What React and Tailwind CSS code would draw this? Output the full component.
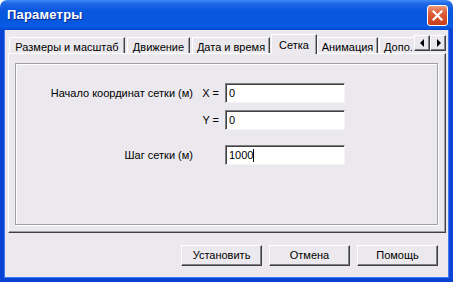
import { useState } from "react";

function Tab({ label, active, className = "" }) {
  if (active) {
    return (
      <div
        className={`relative z-10 -mb-px h-[20px] flex items-start justify-center pt-[2px] bg-[#ebe9ed] border-t border-l border-white border-r border-r-[#404040] shadow-[inset_-1px_0_0_#a0a0a0] ${className}`}
      >
        {label}
      </div>
    );
  }
  return (
    <div
      className={`h-[16px] flex items-start justify-center pt-[1px] whitespace-nowrap overflow-hidden bg-[#ebe9ed] border-t border-l border-white border-r border-r-[#404040] shadow-[inset_-1px_0_0_#a0a0a0] ${className}`}
    >
      {label}
    </div>
  );
}

function Field({ value, caret = false }) {
  return (
    <div className="w-[120px] h-[20px] bg-white border border-t-[#808080] border-l-[#808080] border-r-[#f4f4f4] border-b-[#f4f4f4] shadow-[inset_1px_1px_0_#404040] flex items-center pl-[3px] pt-px">
      <span>{value}</span>
      {caret && <span className="inline-block w-px h-[13px] bg-black" />}
    </div>
  );
}

function Button({ children }) {
  return (
    <button className="w-[81px] h-[21px] bg-[#ebe9ed] border border-t-white border-l-white border-r-[#404040] border-b-[#404040] shadow-[inset_-1px_-1px_0_#808080] text-[11px] text-black flex items-center justify-center">
      {children}
    </button>
  );
}

function ArrowButton({ dir }) {
  return (
    <div className="w-[16px] h-[16px] bg-[#ebe9ed] border border-t-white border-l-white border-r-[#404040] border-b-[#404040] shadow-[inset_-1px_-1px_0_#808080] flex items-center justify-center">
      <svg width="5" height="8" viewBox="0 0 5 8">
        {dir === "left" ? (
          <path d="M4 0 L4 8 L0 4 Z" fill="#000" />
        ) : (
          <path d="M1 0 L1 8 L5 4 Z" fill="#000" />
        )}
      </svg>
    </div>
  );
}

export default function App() {
  const [step] = useState("1000");

  return (
    <div
      className="w-[453px] h-[282px] flex flex-col overflow-hidden text-[11px] text-black"
      style={{ fontFamily: '"Liberation Sans", Arial, sans-serif' }}
    >
      <div className="h-[30px] shrink-0 rounded-t-[7px] flex items-center pl-[7px] pr-[5px] bg-[linear-gradient(to_bottom,#3d8bf5_0%,#1f68e6_12%,#0a58e0_35%,#0756de_70%,#0a5ce6_88%,#0047cf_100%)]">
        <span className="text-white font-bold text-[13px] tracking-[0.2px] [text-shadow:1px_1px_0_#0a2a8a]">
          Параметры
        </span>
        <div className="ml-auto w-[21px] h-[21px] rounded-[3px] border border-white bg-[linear-gradient(to_bottom,#ec9b7c_0%,#df5f3b_35%,#d24a26_75%,#c43f1f_100%)] flex items-center justify-center">
          <svg width="11" height="11" viewBox="0 0 11 11">
            <path d="M1.5 1.5 L9.5 9.5 M9.5 1.5 L1.5 9.5" stroke="#fff" strokeWidth="2.2" strokeLinecap="square" />
          </svg>
        </div>
      </div>

      <div className="flex-1 flex flex-col bg-[#ebe9ed] border-l-4 border-r-4 border-b-4 border-[#0b44d4] shadow-[inset_1px_0_0_#3c7cf0,inset_-1px_0_0_#3c7cf0,inset_0_-1px_0_#3c7cf0] pt-[3px] pl-[4px] pr-[3px]">
        <div className="w-[438px] h-[200px] flex flex-col">
          <div className="h-[20px] flex items-end">
            <Tab label="Размеры и масштаб" className="ml-[1px] w-[116px]" />
            <Tab label="Движение" className="ml-[2px] w-[63px]" />
            <Tab label="Дата и время" className="ml-[2px] w-[78px]" />
            <Tab label="Сетка" active className="ml-[1px] w-[46px]" />
            <Tab label="Анимация" className="w-[61px]" />
            <Tab label="Допо." className="ml-[1px] w-[35px] justify-start pl-[4px] border-r-0 shadow-none" />
            <div className="flex self-start mt-[2px]">
              <ArrowButton dir="left" />
              <ArrowButton dir="right" />
            </div>
          </div>
          <div className="flex-1 border border-t-white border-l-white border-r-[#404040] border-b-[#404040] shadow-[inset_-1px_-1px_0_#a0a0a0] pt-[9px] pl-[6px] pr-[7px] pb-[7px]">
            <div className="h-full border border-[#a0a0a0] shadow-[inset_1px_1px_0_#fff,1px_1px_0_#fff] pt-[19px]">
              <div className="flex items-center">
                <span className="w-[177px] text-right">Начало координат сетки (м)</span>
                <span className="w-[26px] text-right">X =</span>
                <div className="ml-[6px]">
                  <Field value="0" />
                </div>
              </div>
              <div className="flex items-center mt-[7px]">
                <span className="w-[177px]" />
                <span className="w-[26px] text-right">Y =</span>
                <div className="ml-[6px]">
                  <Field value="0" />
                </div>
              </div>
              <div className="flex items-center mt-[15px]">
                <span className="w-[177px] text-right">Шаг сетки (м)</span>
                <span className="w-[26px]" />
                <div className="ml-[6px]">
                  <Field value={step} caret />
                </div>
              </div>
            </div>
          </div>
        </div>

        <div className="flex justify-end gap-[7px] mt-[12px] pr-[8px]">
          <Button>Установить</Button>
          <Button>Отмена</Button>
          <Button>Помощь</Button>
        </div>
      </div>
    </div>
  );
}
